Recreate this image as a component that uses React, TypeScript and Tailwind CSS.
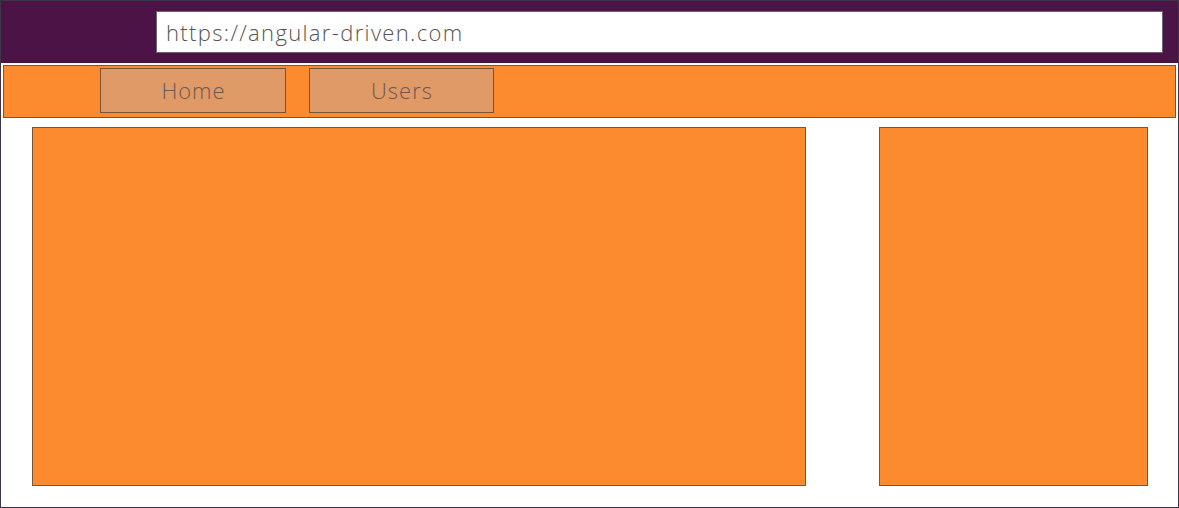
import React from "react";

export default function App() {
  const font = { fontFamily: '"Open Sans", "Noto Sans", sans-serif' };
  return (
    <div className="w-[1179px] h-[508px] bg-white border border-[#3e3446] flex flex-col" style={font}>
      <div className="h-[62px] bg-[#4b1346] pl-[155px] pr-[15px] pt-[10px]">
        <div className="h-[42px] bg-white border border-[#6d6475] flex items-center pl-[9px] text-[22px] font-light text-[#555] tracking-[1.35px]">
          https://angular-driven.com
        </div>
      </div>
      <div className="mt-[2px] mx-[2px] h-[53px] bg-[#fc8a2f] border border-[#7a5535] flex items-start gap-[23px] pl-[96px] pt-[2px]">
        <div className="w-[186px] h-[45px] bg-[#e09a68] border border-[#7a5535] flex items-center justify-center pl-[1px] text-[22px] font-light text-[#6e5848] tracking-[1px]">
          Home
        </div>
        <div className="w-[185px] h-[45px] bg-[#e09a68] border border-[#7a5535] flex items-center justify-center pl-[1px] text-[22px] font-light text-[#6e5848] tracking-[1px]">
          Users
        </div>
      </div>
      <div className="flex justify-between pl-[31px] pr-[30px] pt-[9px]">
        <div className="w-[774px] h-[359px] bg-[#fc8a2f] border border-[#7a5535]" />
        <div className="w-[269px] h-[359px] bg-[#fc8a2f] border border-[#7a5535]" />
      </div>
    </div>
  );
}
